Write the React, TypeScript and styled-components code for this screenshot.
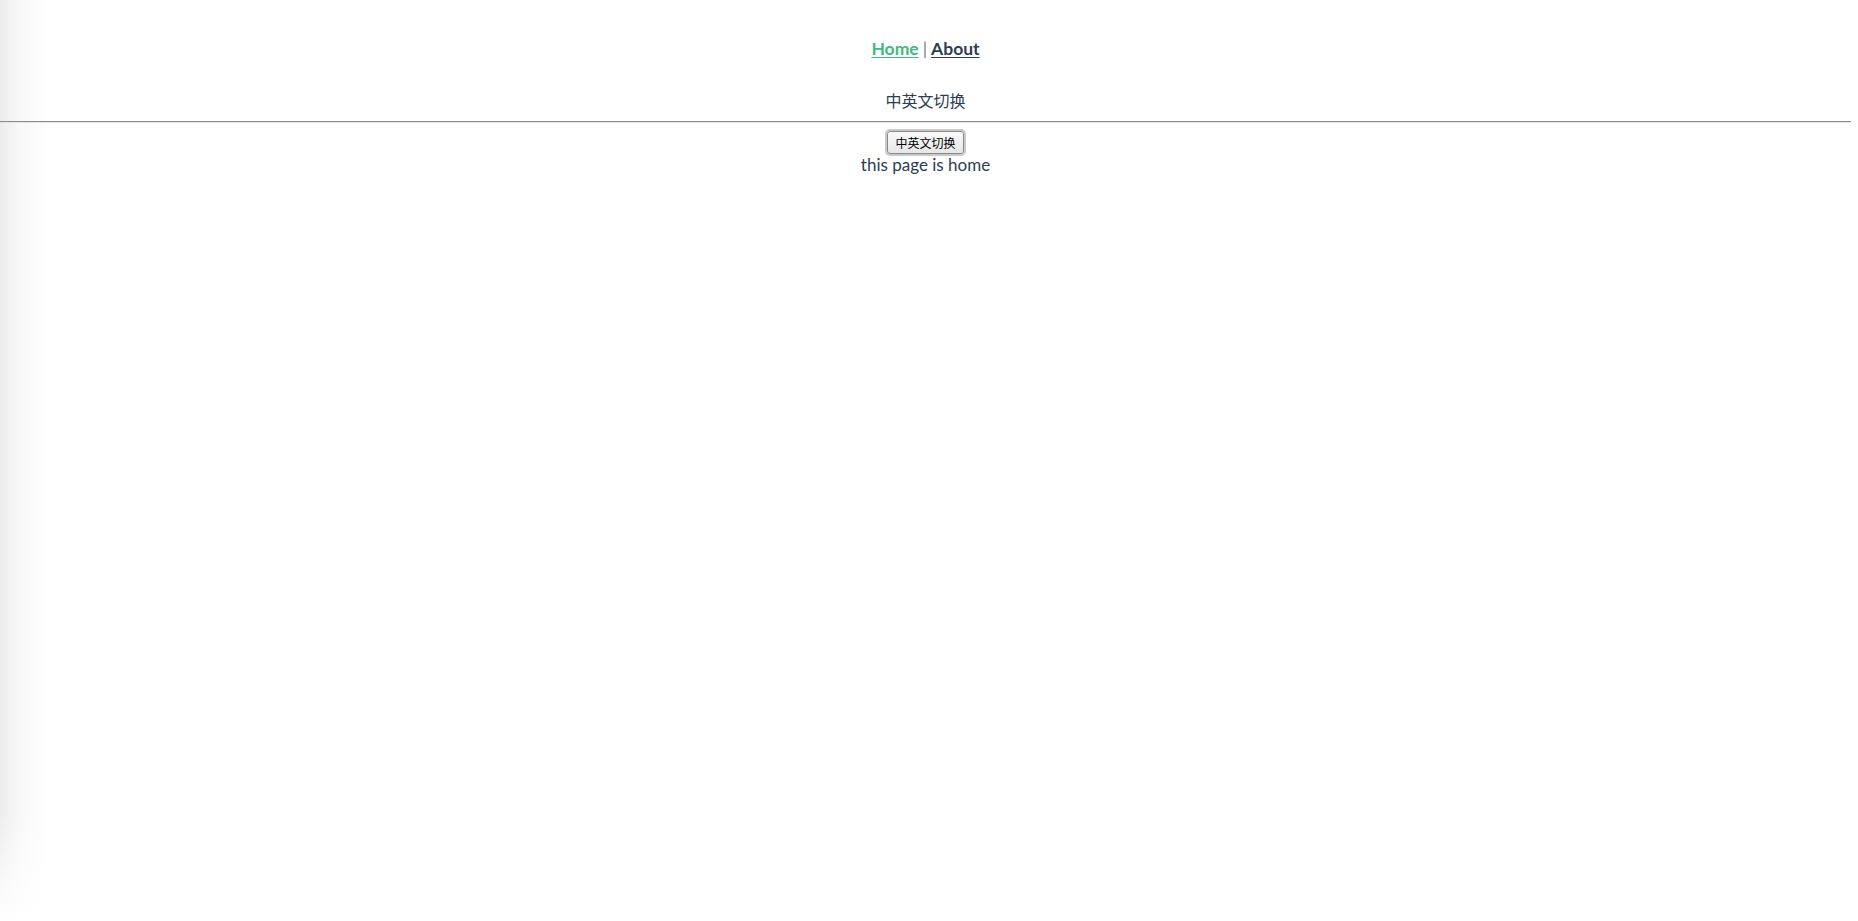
import styled, { createGlobalStyle } from 'styled-components';

const GlobalStyle = createGlobalStyle`
  html, body {
    margin: 0;
    padding: 0;
    min-height: 100%;
  }
  body {
    min-height: 921px;
    background:
      linear-gradient(to bottom, rgba(255,255,255,0) 88%, #fff 100%),
      linear-gradient(to right, #ececec 0, #f8f8f8 20px, #fff 48px);
    font-family: Lato, "Noto Sans", "Noto Sans CJK SC", sans-serif;
  }
`;

const App = () => {
    return (
        <>
            <GlobalStyle />
            <AppRoot>
                <Nav>
                    <NavLink href="#/" $active>Home</NavLink>
                    <Divider>|</Divider>
                    <NavLink href="#/about">About</NavLink>
                </Nav>
                <Title>中英文切换</Title>
                <Rule />
                <SwitchButton type="button">中英文切换</SwitchButton>
                <PageText>this page is home</PageText>
            </AppRoot>
        </>
    );
};

const AppRoot = styled.div`
  margin-right: 7px;
  text-align: center;
  color: #2c3e50;
  font-family: Lato, "Noto Sans", "Noto Sans CJK SC", sans-serif;
  -webkit-font-smoothing: antialiased;
`;

const Nav = styled.div`
  padding-top: 37px;
  height: 24px;
  line-height: 24px;
  font-size: 17.5px;
`;

interface NavLinkProps {
    $active?: boolean;
}

const NavLink = styled.a<NavLinkProps>`
  font-weight: bold;
  color: ${props => props.$active ? '#42b983' : '#2c3e50'};
  text-decoration: underline;
  text-underline-offset: 2px;
`;

const Divider = styled.span`
  margin: 0 4px;
  color: #75808b;
  font-weight: 400;
`;

const Title = styled.div`
  margin-top: 29px;
  line-height: 20px;
  font-size: 16px;
  font-family: "Noto Sans CJK SC", sans-serif;
`;

const Rule = styled.hr`
  margin: 11px 0 0;
  border: none;
  border-top: 1px solid #8c8c8c;
  border-bottom: 1px solid #e4e4e4;
  height: 0;
`;

const SwitchButton = styled.button`
  margin-top: 8px;
  width: 77px;
  height: 23px;
  padding: 0;
  font-size: 12px;
  font-family: "Noto Sans CJK SC", sans-serif;
  color: #000;
  background: linear-gradient(#fafafa, #e6e6e6);
  border: 1px solid #8a8a8a;
  border-radius: 3px;
  box-shadow: 0 0 0 2px #c9c9c9;
  cursor: pointer;
`;

const PageText = styled.div`
  margin-top: 1px;
  line-height: 20px;
  font-size: 17px;
`;

export default App;
